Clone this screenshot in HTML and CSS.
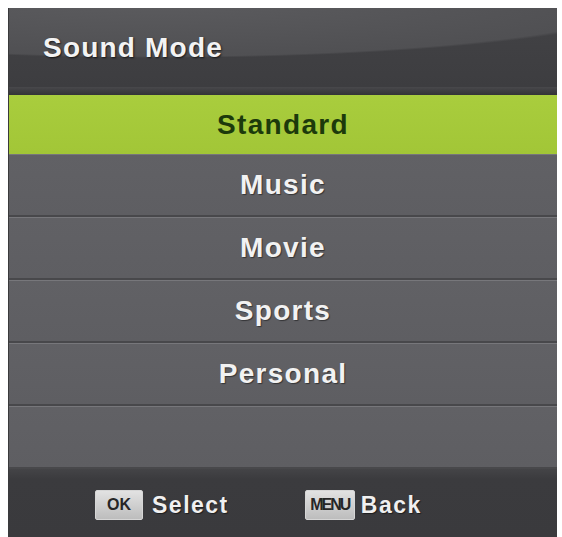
FILE: index.html
```html
<!DOCTYPE html>
<html lang="en">
<head>
<meta charset="utf-8">
<title>Sound Mode</title>
<link rel="stylesheet" href="styles.css">
</head>
<body>
<div class="osd">
  <div class="osd-header">
    <div class="title-bar"><span class="title">Sound Mode</span></div>
    <div class="header-rule"></div>
  </div>
  <ul class="menu">
    <li class="item active">Standard</li>
    <li class="item">Music</li>
    <li class="item">Movie</li>
    <li class="item">Sports</li>
    <li class="item">Personal</li>
    <li class="item"></li>
  </ul>
  <div class="footer">
    <div class="hint"><span class="key key-ok">OK</span><span class="label">Select</span></div>
    <div class="hint"><span class="key key-menu">MENU</span><span class="label">Back</span></div>
  </div>
</div>
</body>
</html>
```
FILE: styles.css
```css
html, body {
  background: #ffffff;
}
body {
  margin: 8px 5px 0 8px;
  font-family: "Liberation Sans", Arial, sans-serif;
  font-weight: bold;
}
.osd {
  width: 549px;
  height: 529px;
  display: flex;
  flex-direction: column;
  background: #616165;
  overflow: hidden;
  border-left: 1px solid #3a3a3c;
  box-sizing: border-box;
}
.osd-header {
  display: flex;
  flex-direction: column;
}
.title-bar {
  height: 79px;
  display: flex;
  align-items: center;
  padding-left: 34px;
  background:
    radial-gradient(ellipse 500px 60px at 150px -10px, #5c5c5f 0%, #505053 97%, rgba(80,80,83,0) 100%),
    linear-gradient(#434346, #3d3d40);
}
.title {
  color: #f3f3f3;
  font-size: 28px;
  letter-spacing: 1.2px;
  text-shadow: 1px 1px 2px rgba(0, 0, 0, 0.7);
}
.header-rule {
  height: 8px;
  background: linear-gradient(#48484b, #333336);
}
.menu {
  list-style: none;
  margin: 0;
  padding: 0;
}
.item {
  height: 60px;
  border-top: 1px solid #77777b;
  border-bottom: 2px solid #48484b;
  display: flex;
  align-items: center;
  justify-content: center;
  color: #f2f2f2;
  font-size: 28px;
  letter-spacing: 1.3px;
  text-shadow: 1px 1px 1px rgba(0, 0, 0, 0.45);
  background: linear-gradient(#616165, #5e5e62);
}
.item.active {
  height: 59px;
  border: none;
  background: linear-gradient(#a9cd3d, #a2c637);
  color: #1c3a0b;
  text-shadow: none;
}
.footer {
  flex: 1;
  display: flex;
  align-items: center;
  padding: 4px 0 0 86px;
  background: linear-gradient(#444447, #3b3b3e 15%, #3a3a3d);
}
.hint {
  display: flex;
  align-items: center;
}
.hint + .hint {
  margin-left: 76px;
}
.key {
  width: 48px;
  height: 30px;
  box-sizing: border-box;
  display: flex;
  align-items: center;
  justify-content: center;
  margin-right: 9px;
  background: linear-gradient(#e2e2e2, #bdbdbd);
  border: 1px solid #d6d6d6;
  border-radius: 2px;
  color: #262626;
  font-size: 16px;
}
.key-menu {
  width: 50px;
  margin-right: 6px;
  letter-spacing: -2px;
}
.label {
  color: #f0f0f0;
  font-size: 23px;
  letter-spacing: 1.5px;
  text-shadow: 1px 1px 1px rgba(0, 0, 0, 0.5);
}
```
